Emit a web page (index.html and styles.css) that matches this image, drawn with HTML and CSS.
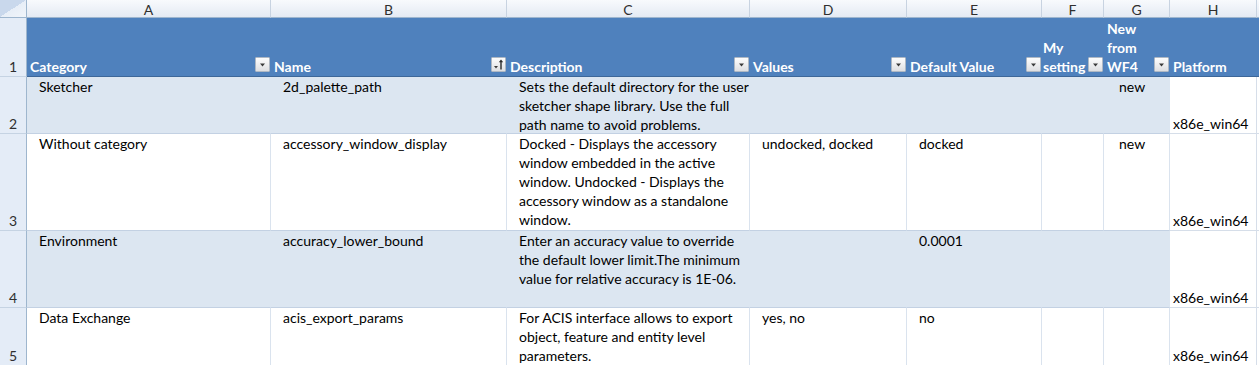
FILE: index.html
```html
<!DOCTYPE html>
<html>
<head>
<meta charset="utf-8">
<link rel="stylesheet" href="styles.css">
</head>
<body>
<div class="sheet">
  <div class="corner"></div>
  <div class="colhead">A</div>
  <div class="colhead">B</div>
  <div class="colhead">C</div>
  <div class="colhead">D</div>
  <div class="colhead">E</div>
  <div class="colhead">F</div>
  <div class="colhead">G</div>
  <div class="colhead">H</div>
  <div class="colhead"></div>

  <div class="rownum">1</div>
  <div class="th"><span>Category</span><span class="filter"><svg width="13" height="13" viewBox="0 0 13 13"><path d="M4 5.5h5l-2.5 3z" fill="#3a3a3a"/></svg></span></div>
  <div class="th"><span>Name</span><span class="filter"><svg width="13" height="13" viewBox="0 0 13 13"><path d="M2 8h4l-2 2.5z" fill="#3a3a3a"/><path d="M9 1.5l-2.2 2.8h1.5v7.2h1.4v-7.2h1.5z" fill="#2a2a2a"/></svg></span></div>
  <div class="th"><span>Description</span><span class="filter"><svg width="13" height="13" viewBox="0 0 13 13"><path d="M4 5.5h5l-2.5 3z" fill="#3a3a3a"/></svg></span></div>
  <div class="th"><span>Values</span><span class="filter"><svg width="13" height="13" viewBox="0 0 13 13"><path d="M4 5.5h5l-2.5 3z" fill="#3a3a3a"/></svg></span></div>
  <div class="th"><span>Default Value</span><span class="filter"><svg width="13" height="13" viewBox="0 0 13 13"><path d="M4 5.5h5l-2.5 3z" fill="#3a3a3a"/></svg></span></div>
  <div class="th th-tight"><span>My<br>setting</span><span class="filter"><svg width="13" height="13" viewBox="0 0 13 13"><path d="M4 5.5h5l-2.5 3z" fill="#3a3a3a"/></svg></span></div>
  <div class="th"><span>New<br>from<br>WF4</span><span class="filter"><svg width="13" height="13" viewBox="0 0 13 13"><path d="M4 5.5h5l-2.5 3z" fill="#3a3a3a"/></svg></span></div>
  <div class="th"><span>Platform</span></div>
  <div class="th"></div>

  <div class="rownum">2</div>
  <div class="td band">Sketcher</div>
  <div class="td band">2d_palette_path</div>
  <div class="td band">Sets the default directory for the user<br>sketcher shape library. Use the full<br>path name to avoid problems.</div>
  <div class="td band"></div>
  <div class="td band"></div>
  <div class="td band"></div>
  <div class="td band g">new</div>
  <div class="plat">x86e_win64</div>
  <div class="grid"></div>

  <div class="rownum">3</div>
  <div class="td">Without category</div>
  <div class="td">accessory_window_display</div>
  <div class="td">Docked - Displays the accessory<br>window embedded in the active<br>window. Undocked - Displays the<br>accessory window as a standalone<br>window.</div>
  <div class="td">undocked, docked</div>
  <div class="td">docked</div>
  <div class="td"></div>
  <div class="td g">new</div>
  <div class="plat">x86e_win64</div>
  <div class="grid"></div>

  <div class="rownum">4</div>
  <div class="td band">Environment</div>
  <div class="td band">accuracy_lower_bound</div>
  <div class="td band">Enter an accuracy value to override<br>the default lower limit.The minimum<br>value for relative accuracy is 1E-06.</div>
  <div class="td band"></div>
  <div class="td band">0.0001</div>
  <div class="td band"></div>
  <div class="td band g"></div>
  <div class="plat">x86e_win64</div>
  <div class="grid"></div>

  <div class="rownum">5</div>
  <div class="td">Data Exchange</div>
  <div class="td">acis_export_params</div>
  <div class="td">For ACIS interface allows to export<br>object, feature and entity level<br>parameters.</div>
  <div class="td">yes, no</div>
  <div class="td">no</div>
  <div class="td"></div>
  <div class="td g"></div>
  <div class="plat">x86e_win64</div>
  <div class="grid"></div>
</div>
</body>
</html>
```

FILE: styles.css
```css
html, body {
  margin: 0;
  padding: 0;
  background: #ffffff;
  overflow: hidden;
}

body {
  font-family: "Lato", "Liberation Sans", sans-serif;
  font-size: 14px;
  color: #000;
}

.sheet {
  display: grid;
  grid-template-columns: 27px 244px 236px 243px 157px 135px 62px 66px 87px 1fr;
  grid-template-rows: 18px 59px 57px 97px 77px 58px;
  width: 1259px;
  height: 366px;
  overflow: hidden;
}

.sheet > div {
  box-sizing: border-box;
  overflow: hidden;
  white-space: nowrap;
  line-height: 19px;
}

.corner {
  background: linear-gradient(to bottom right, #c9d8ec 0%, #c9d8ec 50%, #e7eef7 50%, #f1f5fa 100%);
  border-right: 1px solid #9eb6ce;
  border-bottom: 1px solid #9eb6ce;
}

.colhead {
  background: linear-gradient(#f8fafd, #e4eaf3);
  border-right: 1px solid #c8d3e1;
  border-bottom: 1px solid #9eb6ce;
  text-align: center;
  line-height: 18px;
  font-size: 14px;
  color: #2f2f2f;
}

.rownum {
  background: #e4ecf7;
  border-right: 1px solid #9eb6ce;
  border-bottom: 1px solid #c5d3e3;
  color: #2f2f2f;
  display: flex;
  align-items: flex-end;
  justify-content: center;
}

.th {
  background: #4f81bd;
  border-bottom: 1px solid #3d6799;
  color: #ffffff;
  font-weight: bold;
  display: flex;
  align-items: flex-end;
  justify-content: space-between;
  padding-left: 3px;
  padding-right: 1px;
}

.th-tight {
  padding-left: 1px;
}

.filter {
  flex: none;
  width: 15px;
  height: 15px;
  margin-bottom: 4px;
  box-sizing: border-box;
  border: 1px solid #aeb8c4;
  border-radius: 1px;
  background: linear-gradient(#fdfdfd, #dedfe2);
  display: flex;
  align-items: center;
  justify-content: center;
}

.filter svg {
  display: block;
}

.td {
  padding-left: 12px;
  border-right: 1px solid #dae3ee;
  border-bottom: 1px solid #c3d1e3;
  background: #ffffff;
}

.td.band {
  background: #dce6f1;
  border-right-color: #dce6f1;
}

.td.g {
  padding-left: 15px;
}

.plat {
  border-right: 1px solid #d6dee9;
  border-bottom: 1px solid #d6dee9;
  padding-left: 3px;
  display: flex;
  align-items: flex-end;
}

.grid {
  border-bottom: 1px solid #d6dee9;
}
```
